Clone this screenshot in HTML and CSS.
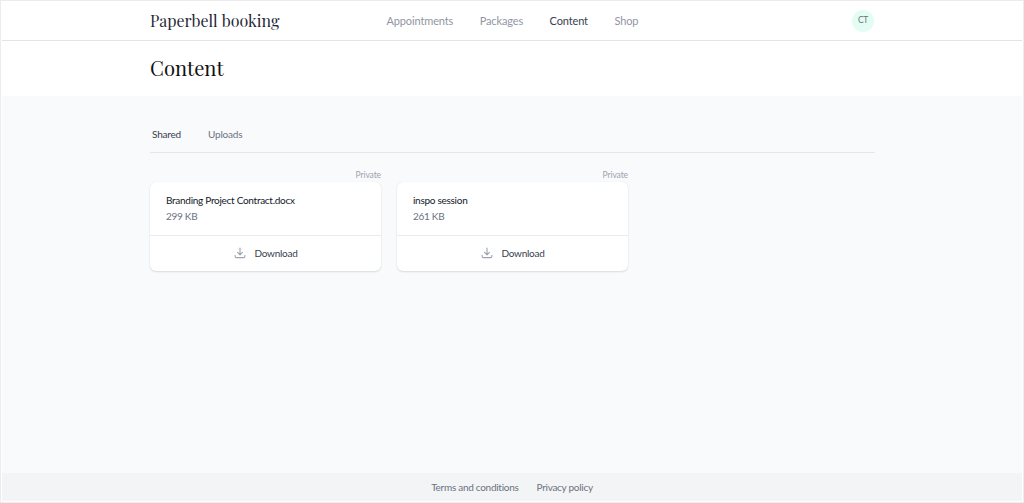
FILE: index.html
```html
<!DOCTYPE html>
<html lang="en">
<head>
    <meta charset="UTF-8">
    <meta name="viewport" content="width=device-width, initial-scale=1.0">
    <title>Content - Paperbell booking</title>
    <link rel="stylesheet" href="styles.css">
</head>
<body>
    <header class="header">
        <div class="container header-inner">
            <a href="#" class="brand">Paperbell booking</a>
            <nav class="nav">
                <a href="#">Appointments</a>
                <a href="#">Packages</a>
                <a href="#" class="active">Content</a>
                <a href="#">Shop</a>
            </nav>
            <div class="avatar">CT</div>
        </div>
    </header>
    <div class="page-title">
        <div class="container">
            <h1>Content</h1>
        </div>
    </div>
    <main class="main">
        <div class="container">
            <div class="tabs">
                <a href="#" class="active">Shared</a>
                <a href="#">Uploads</a>
            </div>
            <div class="files">
                <div class="file">
                    <div class="visibility">Private</div>
                    <div class="card">
                        <div class="card-body">
                            <div class="file-name">Branding Project Contract.docx</div>
                            <div class="file-size">299 KB</div>
                        </div>
                        <a href="#" class="download">
                            <svg width="12" height="12" viewBox="0 0 12 12"><path d="M6 1v6.6M3.6 5.4L6 7.8l2.4-2.4M1.1 8.4v.8c0 .9.5 1.4 1.4 1.4h7c.9 0 1.4-.5 1.4-1.4v-.8"/></svg>
                            <span>Download</span>
                        </a>
                    </div>
                </div>
                <div class="file">
                    <div class="visibility">Private</div>
                    <div class="card">
                        <div class="card-body">
                            <div class="file-name">inspo session</div>
                            <div class="file-size">261 KB</div>
                        </div>
                        <a href="#" class="download">
                            <svg width="12" height="12" viewBox="0 0 12 12"><path d="M6 1v6.6M3.6 5.4L6 7.8l2.4-2.4M1.1 8.4v.8c0 .9.5 1.4 1.4 1.4h7c.9 0 1.4-.5 1.4-1.4v-.8"/></svg>
                            <span>Download</span>
                        </a>
                    </div>
                </div>
            </div>
        </div>
    </main>
    <footer class="footer">
        <a href="#">Terms and conditions</a>
        <a href="#">Privacy policy</a>
    </footer>
</body>
</html>
```
FILE: styles.css
```css
* {
    box-sizing: border-box;
}
body {
    font-family: Lato, 'Liberation Sans', sans-serif;
    font-size: 10px;
    letter-spacing: -0.28px;
    color: #374151;
    background-color: #fff;
    margin: 0;
    height: 100vh;
    border: 1px solid #ececec;
    padding: 0 1px 1px;
    display: flex;
    flex-direction: column;
}
a {
    color: inherit;
    text-decoration: none;
}
.container {
    width: 725px;
    margin-left: 148px;
}
.header {
    height: 40px;
    border-bottom: 1px solid #e4e4e6;
}
.header-inner {
    height: 39px;
    display: flex;
    align-items: center;
}
.brand {
    width: 236.5px;
    font-family: 'Playfair Display', 'Liberation Serif', serif;
    font-size: 16px;
    letter-spacing: 0;
    color: #1f2937;
}
.nav {
    display: flex;
    gap: 26.5px;
    font-size: 11px;
    letter-spacing: -0.13px;
    color: #9096a1;
}
.nav .active {
    color: #374151;
}
.avatar {
    width: 22px;
    height: 22px;
    margin-left: auto;
    margin-right: 1px;
    border-radius: 50%;
    background-color: #e3fdf3;
    color: #6b7280;
    font-size: 8.5px;
    line-height: 21px;
    text-align: center;
}
.page-title {
    height: 55px;
}
.page-title h1 {
    margin: 0;
    font-family: 'Playfair Display', 'Liberation Serif', serif;
    font-size: 20.2px;
    font-weight: 400;
    letter-spacing: 0;
    line-height: 54px;
    color: #111;
}
.main {
    flex: 1;
    background-color: #f9fafc;
}
.tabs {
    display: flex;
    gap: 27px;
    height: 57px;
    padding: 31px 2px 0;
    line-height: 14px;
    letter-spacing: -0.2px;
    color: #6b7280;
    border-bottom: 1px solid #e5e7eb;
}
.tabs .active {
    color: #374151;
}
.files {
    display: flex;
    gap: 16px;
    padding-top: 16px;
}
.file {
    width: 231px;
}
.visibility {
    height: 13px;
    font-size: 8.5px;
    line-height: 12px;
    letter-spacing: -0.1px;
    text-align: right;
    color: #9ca3af;
}
.card {
    height: 89px;
    background-color: #fff;
    border-radius: 6px;
    box-shadow: 0 1px 2px rgba(0, 0, 0, 0.12), 0 0 1px rgba(0, 0, 0, 0.1);
}
.card-body {
    height: 54px;
    padding: 10px 16px 0;
    line-height: 16px;
    border-bottom: 1px solid #e9ebef;
}
.file-name {
    color: #111827;
}
.file-size {
    color: #6b7280;
}
.download {
    height: 34px;
    display: flex;
    align-items: center;
    justify-content: center;
    gap: 9px;
}
.download svg {
    fill: none;
    stroke: #9ca3af;
    stroke-width: 1.1;
    stroke-linecap: round;
    stroke-linejoin: round;
}
.footer {
    height: 28px;
    display: flex;
    justify-content: center;
    gap: 18px;
    line-height: 29px;
    color: #6b7280;
    background-color: #f3f4f6;
}
```
